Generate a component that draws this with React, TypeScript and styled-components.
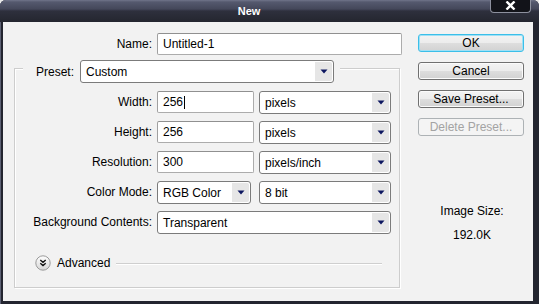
import React from "react";
import styled, { createGlobalStyle } from "styled-components";

const GlobalStyle = createGlobalStyle`
  html, body { margin: 0; padding: 0; background: #eaeaea; }
  body { font-family: "Liberation Sans", Arial, sans-serif; font-size: 12px; color: #000; }
`;

const Window = styled.div`
  width: 539px;
  height: 304px;
  box-sizing: border-box;
  display: flex;
  flex-direction: column;
  background: #23252f;
  border-radius: 6px 6px 0 0;
  overflow: hidden;
  box-shadow: inset 1px 0 0 #5d6174;
`;

const TitleBar = styled.div`
  height: 22px;
  flex: none;
  display: flex;
  align-items: flex-start;
  padding: 0 8px 0 3px;
  background: linear-gradient(
    to bottom,
    #70748a 0px,
    #55596e 2px,
    #44475a 9px,
    #2e303d 11px,
    #24262f 22px
  );
`;

const Title = styled.div`
  flex: 1;
  text-align: center;
  padding-left: 5px;
  color: #fff;
  font-weight: bold;
  font-size: 11px;
  line-height: 22px;
`;

const CloseButton = styled.div`
  width: 41px;
  height: 13px;
  box-sizing: border-box;
  border: 1px solid #8d909e;
  border-top: none;
  border-radius: 0 0 4px 4px;
  background: #121319;
  display: flex;
  align-items: flex-start;
  justify-content: center;
  padding-top: 1px;
`;

const Body = styled.div`
  flex: 1;
  margin: 0 6px 3px 3px;
  background: #f2f2f2;
  display: flex;
  align-items: flex-start;
  padding: 11px 0 0 11px;
  box-sizing: border-box;
`;

const LeftColumn = styled.div`
  width: 388px;
  display: flex;
  flex-direction: column;
`;

const FieldRow = styled.div`
  display: flex;
  align-items: flex-start;
  gap: 5px;
  height: 22px;
`;

const Label = styled.div<{ $w: number }>`
  width: ${(p) => p.$w}px;
  flex: none;
  text-align: right;
  line-height: 22px;
  white-space: nowrap;
`;

const TextField = styled.div<{ $w: number }>`
  width: ${(p) => p.$w}px;
  height: 22px;
  flex: none;
  box-sizing: border-box;
  border: 1px solid #acacac;
  border-top-color: #909090;
  border-left-color: #a0a0a0;
  border-radius: 2px;
  background: #fff;
  padding: 0 5px;
  display: flex;
  align-items: center;
  white-space: nowrap;
`;

const Caret = styled.span`
  display: inline-block;
  width: 1px;
  height: 13px;
  background: #000;
  margin-left: 1px;
`;

const SelectBox = styled.div<{ $w: number; $ml?: number }>`
  width: ${(p) => p.$w}px;
  margin-left: ${(p) => p.$ml || 0}px;
  height: 23px;
  flex: none;
  box-sizing: border-box;
  border: 1px solid #7b7b7b;
  border-radius: 3px;
  background: #fff;
  padding: 1px;
  display: flex;
  align-items: stretch;
`;

const SelectText = styled.span`
  flex: 1;
  padding-left: 4px;
  display: flex;
  align-items: center;
  white-space: nowrap;
  overflow: hidden;
`;

const ArrowCell = styled.span`
  width: 17px;
  flex: none;
  background: #e6e6e6;
  border-radius: 0 2px 2px 0;
  display: flex;
  align-items: center;
  justify-content: center;
`;

const GroupBox = styled.div`
  margin-top: 13px;
  width: 386px;
  box-sizing: border-box;
  border: 1px solid #cdcdcd;
  box-shadow: inset 1px 1px 0 #fff, 1px 1px 0 #fff;
  padding-bottom: 16px;
  display: flex;
  flex-direction: column;
`;

const GroupHeader = styled.div`
  margin: -9px 0 0 8px;
  width: 317px;
  height: 23px;
  box-sizing: border-box;
  padding: 0 6px 0 13px;
  background: #f2f2f2;
  display: flex;
  align-items: center;
  gap: 6px;
`;

const HeaderLabel = styled.span`
  white-space: nowrap;
`;

const Rows = styled.div`
  margin-top: 8px;
  display: flex;
  flex-direction: column;
  gap: 8px;
`;

const AdvancedRow = styled.div`
  margin: 22px 17px 0 20px;
  height: 16px;
  display: flex;
  align-items: center;
  gap: 6px;
`;

const AdvancedText = styled.span`
  white-space: nowrap;
`;

const Rule = styled.div`
  flex: 1;
  height: 1px;
  background: #cfcfcf;
  box-shadow: 0 1px 0 #fff;
`;

const RightColumn = styled.div`
  width: 106px;
  margin-left: 16px;
  padding-top: 1px;
  display: flex;
  flex-direction: column;
  gap: 10px;
`;

const Button = styled.button<{ $default?: boolean }>`
  width: 106px;
  height: 18px;
  box-sizing: border-box;
  padding: 0;
  font: 12px "Liberation Sans", Arial, sans-serif;
  color: #000;
  border-radius: 3px;
  border: 1px solid ${(p) => (p.$default ? "#3bbfe9" : "#707070")};
  box-shadow: ${(p) => (p.$default ? "inset 0 0 0 1px #9fe0f5" : "inset 0 0 0 1px #fbfbfb")};
  background: linear-gradient(to bottom, #f3f3f3 0%, #ececec 48%, #dddddd 52%, #d2d2d2 100%);
  line-height: 16px;

  &:disabled {
    border-color: #adb2b5;
    box-shadow: none;
    background: #f4f4f4;
    color: #a3a3a3;
  }
`;

const SizeBlock = styled.div`
  margin-top: 58px;
  display: flex;
  flex-direction: column;
  align-items: center;
  gap: 10px;
  padding-left: 2px;
`;

const SizeLine = styled.div`
  line-height: 14px;
  white-space: nowrap;
`;

const DownArrow = () => (
  <svg width="8" height="5" viewBox="0 0 8 5">
    <polygon points="0.5,0.5 7.5,0.5 4,4.5" fill="#0d1760" />
  </svg>
);

const CloseX = () => (
  <svg width="11" height="9" viewBox="0 0 11 9">
    <path d="M1.5 0.5 L9.5 8.5 M9.5 0.5 L1.5 8.5" stroke="#fff" strokeWidth="2.4" />
  </svg>
);

const AdvancedIcon = () => (
  <svg width="16" height="16" viewBox="0 0 16 16">
    <defs>
      <linearGradient id="advg" x1="0" y1="0" x2="0" y2="1">
        <stop offset="0" stopColor="#ffffff" />
        <stop offset="1" stopColor="#d6d6d6" />
      </linearGradient>
    </defs>
    <circle cx="8" cy="8" r="7.2" fill="url(#advg)" stroke="#9a9a9a" strokeWidth="1" />
    <path d="M5.3 5 L8 7.3 L10.7 5 M5.3 8.3 L8 10.6 L10.7 8.3" fill="none" stroke="#111" strokeWidth="1.4" />
  </svg>
);

const Select = ({ w, ml, children }: { w: number; ml?: number; children: React.ReactNode }) => (
  <SelectBox $w={w} $ml={ml}>
    <SelectText>{children}</SelectText>
    <ArrowCell>
      <DownArrow />
    </ArrowCell>
  </SelectBox>
);

export default function App() {
  return (
    <>
      <GlobalStyle />
      <Window>
        <TitleBar>
          <Title>New</Title>
          <CloseButton>
            <CloseX />
          </CloseButton>
        </TitleBar>
        <Body>
          <LeftColumn>
            <FieldRow>
              <Label $w={138}>Name:</Label>
              <TextField $w={245}>Untitled-1</TextField>
            </FieldRow>
            <GroupBox>
              <GroupHeader>
                <HeaderLabel>Preset:</HeaderLabel>
                <Select w={254}>Custom</Select>
              </GroupHeader>
              <Rows>
                <FieldRow>
                  <Label $w={137}>Width:</Label>
                  <TextField $w={97}>
                    256
                    <Caret />
                  </TextField>
                  <Select w={132}>pixels</Select>
                </FieldRow>
                <FieldRow>
                  <Label $w={137}>Height:</Label>
                  <TextField $w={97}>256</TextField>
                  <Select w={132}>pixels</Select>
                </FieldRow>
                <FieldRow>
                  <Label $w={137}>Resolution:</Label>
                  <TextField $w={97}>300</TextField>
                  <Select w={132}>pixels/inch</Select>
                </FieldRow>
                <FieldRow>
                  <Label $w={137}>Color Mode:</Label>
                  <Select w={94}>RGB Color</Select>
                  <Select w={132} ml={3}>8 bit</Select>
                </FieldRow>
                <FieldRow>
                  <Label $w={137}>Background Contents:</Label>
                  <Select w={234}>Transparent</Select>
                </FieldRow>
              </Rows>
              <AdvancedRow>
                <AdvancedIcon />
                <AdvancedText>Advanced</AdvancedText>
                <Rule />
              </AdvancedRow>
            </GroupBox>
          </LeftColumn>
          <RightColumn>
            <Button $default>OK</Button>
            <Button>Cancel</Button>
            <Button>Save Preset...</Button>
            <Button disabled>Delete Preset...</Button>
            <SizeBlock>
              <SizeLine>Image Size:</SizeLine>
              <SizeLine>192.0K</SizeLine>
            </SizeBlock>
          </RightColumn>
        </Body>
      </Window>
    </>
  );
}
